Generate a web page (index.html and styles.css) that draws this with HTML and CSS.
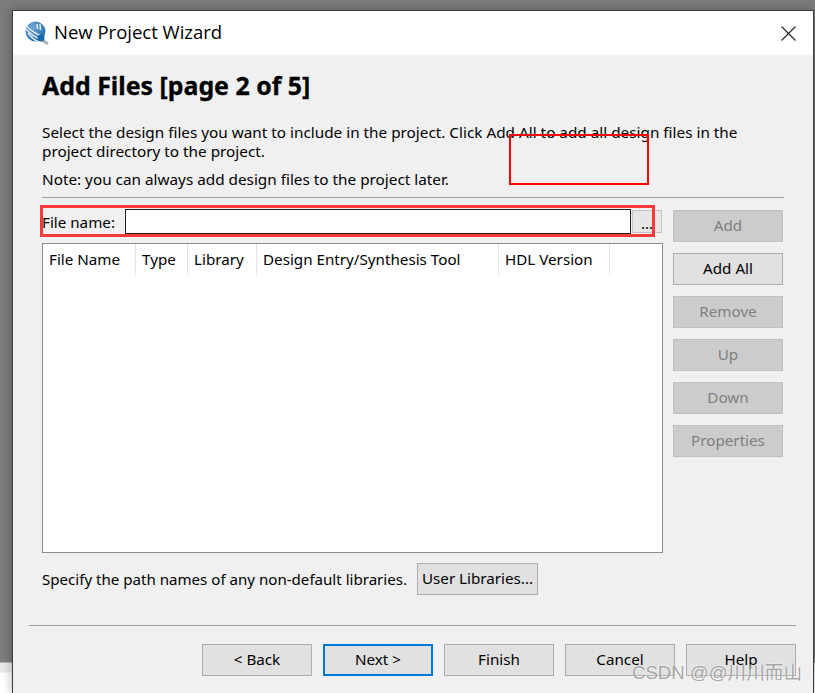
FILE: index.html

```html
<!DOCTYPE html>
<html>
<head>
    <title>New Project Wizard</title>
    <meta charset="UTF-8">
    <link rel="stylesheet" href="styles.css">
</head>
<body>
    <div class="window">
        <div class="titlebar">
            <svg class="app-icon" width="26" height="26" viewBox="0 0 26 26">
                <defs>
                    <radialGradient id="globe" cx="0.35" cy="0.3" r="0.8">
                        <stop offset="0" stop-color="#6fa6d6"/>
                        <stop offset="1" stop-color="#1c6aa8"/>
                    </radialGradient>
                </defs>
                <circle cx="11.5" cy="11.5" r="10" fill="url(#globe)"/>
                <path d="M2 9 C7 15 12 18 19 20 M2.500 6 C8 12 13 15 21 17 M4 13 C7 17 10 20 14 21.500" fill="none" stroke="#e4eef6" stroke-width="1.300"/>
                <path d="M13 4 L13.500 9 M16 4 L16.500 10" stroke="#e4eef6" stroke-width="1.500"/>
                <path d="M17 19 L24 24" stroke="#a9b4bc" stroke-width="3"/>
                <circle cx="17" cy="18" r="3.500" fill="#1668a6"/>
            </svg>
            <span class="title">New Project Wizard</span>
            <svg class="close-icon" width="15" height="15" viewBox="0 0 15 15">
                <path d="M0.500 0.500 L14.500 14.500 M14.500 0.500 L0.500 14.500" stroke="#222" stroke-width="1.100" fill="none"/>
            </svg>
        </div>

        <div class="page">
            <h1>Add Files [page 2 of 5]</h1>
            <p class="intro">Select the design files you want to include in the project. Click Add All to add all design files in the project directory to the project.</p>
            <p class="note">Note: you can always add design files to the project later.</p>
            <div class="rule"></div>

            <div class="main">
                <div class="left">
                    <div class="file-row">
                        <label class="file-label">File name:</label>
                        <div class="file-input"></div>
                        <div class="browse">...</div>
                    </div>
                    <div class="file-table">
                        <div class="table-head">
                            <div class="col col-name">File Name</div>
                            <div class="col col-type">Type</div>
                            <div class="col col-lib">Library</div>
                            <div class="col col-tool">Design Entry/Synthesis Tool</div>
                            <div class="col col-hdl">HDL Version</div>
                        </div>
                    </div>
                    <div class="lib-row">
                        <span class="lib-text">Specify the path names of any non-default libraries.</span>
                        <div class="btn btn-lib">User Libraries...</div>
                    </div>
                </div>
                <div class="side">
                    <div class="btn disabled">Add</div>
                    <div class="btn">Add All</div>
                    <div class="btn disabled">Remove</div>
                    <div class="btn disabled">Up</div>
                    <div class="btn disabled">Down</div>
                    <div class="btn disabled">Properties</div>
                </div>
            </div>
        </div>

        <div class="footer">
            <div class="btn">&lt; Back</div>
            <div class="btn focused">Next &gt;</div>
            <div class="btn">Finish</div>
            <div class="btn">Cancel</div>
            <div class="btn">Help</div>
        </div>
    </div>

    <div class="mark mark-thin"></div>
    <div class="mark mark-thick"></div>
    <div class="watermark">CSDN @@川川而山</div>
</body>
</html>
```

FILE: styles.css

```css
html, body {
    margin: 0;
    height: 693px;
    overflow: hidden;
}
body {
    position: relative;
    font-family: "Noto Sans", Tahoma, sans-serif;
    font-size: 15.2px;
    color: #000;
    background: linear-gradient(to bottom, #7c7c7c 0, #7c7c7c 662px, #e8e8e8 663px, #e8e8e8 672px, #fff 673px);
    padding: 10px 0 0 12px;
    box-sizing: border-box;
}
.window {
    width: 802px;
    height: 683px;
    box-sizing: border-box;
    border: 1px solid #3c3c3c;
    border-bottom: none;
    background-color: #f0f0f0;
    box-shadow: 0 0 10px rgba(0,0,0,0.3);
}
.titlebar {
    height: 44px;
    background-color: white;
    display: flex;
    align-items: center;
    padding: 0 17px 3px 11px;
    box-sizing: border-box;
}
.app-icon {
    margin: 2px 4px 0 0;
}
.title {
    flex: 1;
    font-family: "Open Sans", sans-serif;
    font-size: 18.5px;
}
.close-icon {
    margin-top: 3px;
}
.page {
    padding: 15px 29px 0 29px;
}
h1 {
    margin: 0;
    font-size: 24.900px;
    line-height: 30px;
    font-weight: bold;
    -webkit-text-stroke: 0.3px #000;
}
.intro {
    margin: 23px 0 0 0;
    line-height: 19px;
    width: 710px;
    font-size: 15.3px;
}
.note {
    margin: 9px 0 0 0;
    line-height: 19px;
    font-size: 15.3px;
}
.rule {
    height: 1px;
    background-color: #a0a0a0;
    margin-top: 8px;
    width: 742px;
}
.main {
    display: flex;
    gap: 10px;
    margin-top: 11px;
}
.left {
    width: 621px;
}
.file-row {
    display: flex;
    align-items: center;
    height: 25px;
}
.file-label {
    width: 83px;
}
.file-input {
    width: 506px;
    height: 25px;
    box-sizing: border-box;
    background-color: white;
    border: 1px solid #222;
}
.browse {
    width: 30px;
    height: 23px;
    margin-left: 1px;
    box-sizing: border-box;
    border: 1px solid #c4c4c4;
    background-color: #e6e6e6;
    text-align: center;
    line-height: 24px;
}
.file-table {
    height: 310px;
    box-sizing: border-box;
    margin-top: 9px;
    background-color: white;
    border: 1px solid #8a8a96;
}
.table-head {
    display: flex;
    height: 31px;
    line-height: 31px;
}
.col {
    box-sizing: border-box;
    padding-left: 6px;
    border-right: 1px solid #e4e4e4;
    white-space: nowrap;
}
.col-name { width: 93px; }
.col-type { width: 52px; }
.col-lib { width: 69px; }
.col-tool { width: 242px; }
.col-hdl { width: 111px; }
.lib-row {
    display: flex;
    align-items: center;
    margin-top: 10px;
    justify-content: space-between;
    width: 496px;
}
.lib-text {
    white-space: nowrap;
    font-size: 15.100px;
}
.side {
    width: 110px;
    display: flex;
    flex-direction: column;
    gap: 11px;
    margin-top: 1px;
}
.btn {
    width: 110px;
    height: 32px;
    box-sizing: border-box;
    border: 1px solid #adadad;
    background-color: #e1e1e1;
    text-align: center;
    line-height: 29px;
}
.btn-lib {
    width: 121px;
    white-space: nowrap;
}
.disabled {
    background-color: #cccccc;
    border-color: #bfbfbf;
    color: #7f7f7f;
}
.focused {
    border: 2px solid #0078d7;
    line-height: 27px;
}
.footer {
    margin: 30px 17px 0 16px;
    border-top: 1px solid #a0a0a0;
    padding-top: 18px;
    display: flex;
    justify-content: flex-end;
    gap: 11px;
}
.mark {
    position: absolute;
    box-sizing: border-box;
}
.mark-thin {
    left: 509px;
    top: 134px;
    width: 140px;
    height: 51px;
    border: 2px solid #f00;
}
.mark-thick {
    left: 40px;
    top: 205px;
    width: 615px;
    height: 32px;
    border: 3px solid #f53a3a;
}
.watermark {
    position: absolute;
    left: 632px;
    top: 661px;
    font-family: "Liberation Sans", "Noto Sans CJK SC", sans-serif;
    font-size: 18.6px;
    line-height: 24px;
    white-space: nowrap;
    color: rgba(120,120,120,0.65);
    text-shadow: 0 0 2px #fff;
}
```
